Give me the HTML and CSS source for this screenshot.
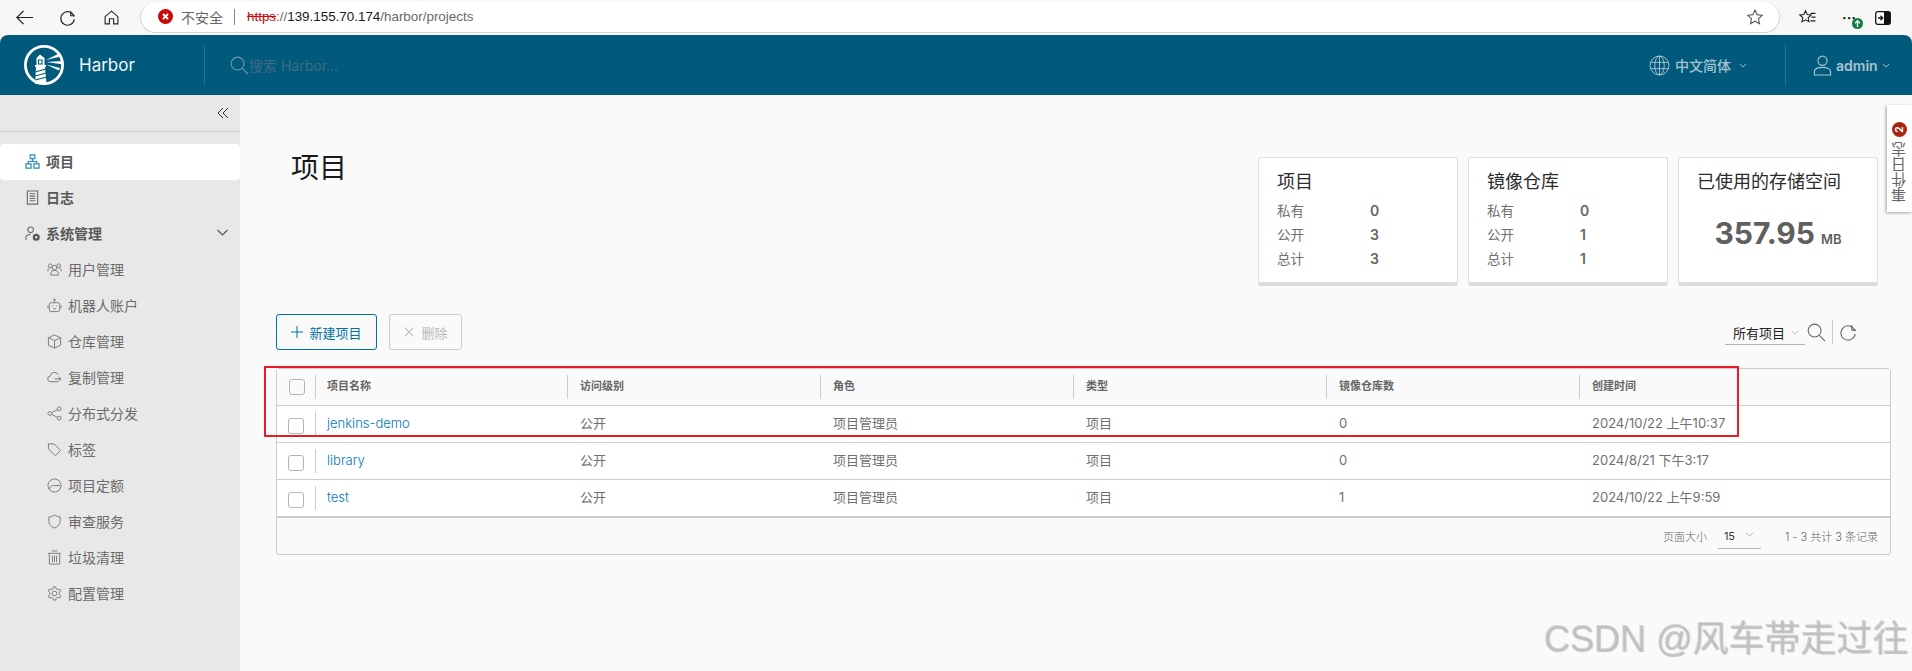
FILE: index.html
```html
<!DOCTYPE html>
<html lang="zh">
<head>
<meta charset="utf-8">
<title>Harbor</title>
<link rel="stylesheet" href="styles.css">
</head>
<body>
<div class="browser">
  <svg class="bicon back" viewBox="0 0 20 20"><path d="M19 10H2M9 3 2 10l7 7"/></svg>
  <svg class="bicon reload" viewBox="0 0 20 20"><path d="M16.800 8.500A7.500 7.500 0 1 0 17 11.500M13 2.500v5h4.500" /></svg>
  <svg class="bicon home" viewBox="0 0 20 20"><path d="M2.500 9 10 2.500 17.500 9v8.500h-5v-6h-5v6h-5z"/></svg>
  <div class="pill">
    <svg class="shield" viewBox="0 0 16 16"><circle cx="8" cy="8" r="8" fill="#c80a0a"/><path d="m5.300 5.300 5.400 5.400m0-5.400-5.400 5.400" stroke="#fff" stroke-width="2"/></svg>
    <span class="unsafe">不安全</span>
    <span class="pill-sep"></span>
    <span class="url"><s class="https">https</s><span class="dim">://</span>139.155.70.174<span class="dim">/harbor/projects</span></span>
    <svg class="star" viewBox="0 0 20 20"><path d="m10 2.200 2.400 5.200 5.600.7-4.100 3.800 1.100 5.600-5-2.800-5 2.800 1.100-5.600L2 8.100l5.600-.7z"/></svg>
  </div>
  <div class="browser-right">
    <svg class="bicon fav" viewBox="0 0 24 20"><path d="m9 2 2 4.500 4.800.5-3.600 3.300 1 4.700L9 12.700 4.800 15l1-4.700L2.200 7 7 6.500z"/><path d="M15 5h6M16 9.500h5M15 14h6"/></svg>
    <div class="more"><span>···</span><i class="update"><svg viewBox="0 0 10 10"><path d="M5 8.500v-6M2.800 4.700 5 2.500l2.200 2.200" fill="none" stroke="#fff" stroke-width="1.200"/></svg></i></div>
    <svg class="bicon split" viewBox="0 0 16 14"><rect x=".7" y=".7" width="14.600" height="12.600" rx="2" fill="#fff" stroke="#111"/><rect x="9" y="1" width="6" height="12" fill="#111"/><path d="M3 7h4.500M5.500 4.800 7.700 7l-2.200 2.200" fill="none" stroke="#111" stroke-width="1.300"/></svg>
  </div>
</div>

<header class="topbar">
  <div class="brand">
    <svg class="logo" viewBox="0 0 40 40">
      <circle cx="20" cy="20" r="18.600" fill="none" stroke="#fff" stroke-width="2.800"/>
      <path d="M16 9.500 20.500 13v7H22v2h-1l1.500 17h-11.500L12 22h-1v-2h1.500v-7z" fill="#fff"/>
      <path d="M14.500 15h3.500v4h-3.500zM11 27l11-3M11 31l11-3M11 35l12-3" fill="none" stroke="#015a7c" stroke-width="1.100"/>
      <path d="M22 15 35 8.500l1.500 3zM22 17l16-1v3.200zM22 19.500l14 3.500-1 2.500z" fill="#fff"/>
    </svg>
    <span class="brand-name">Harbor</span>
  </div>
  <div class="search">
    <svg class="search-ic" viewBox="0 0 20 20"><circle cx="8" cy="8" r="6.800"/><path d="m13 13 6 6"/></svg>
    <span class="search-ph">搜索 Harbor...</span>
  </div>
  <div class="lang">
    <svg class="globe" viewBox="0 0 20 20"><circle cx="10" cy="10" r="9"/><ellipse cx="10" cy="10" rx="4.500" ry="9"/><path d="M10 1v18M1.500 7h17M1.500 13h17"/></svg>
    <span>中文简体</span>
    <svg class="chev-sm lang-chev" viewBox="0 0 10 6"><path d="m1 1 4 4 4-4"/></svg>
  </div>
  <div class="user">
    <svg class="user-ic" viewBox="0 0 20 22"><circle cx="10" cy="6" r="4.800"/><path d="M1.500 21v-3.500c0-3 4-4.500 8.500-4.500s8.500 1.500 8.500 4.500V21z"/></svg>
    <span>admin</span>
    <svg class="chev-sm" viewBox="0 0 10 6"><path d="m1 1 4 4 4-4"/></svg>
  </div>
</header>

<div class="body-row">
  <nav class="sidebar">
    <div class="collapse">
      <svg viewBox="0 0 12 12"><path d="M6 1 1 6l5 5M11 1 6 6l5 5"/></svg>
    </div>
    <ul class="nav">
      <li class="item active">
        <svg class="nic" viewBox="0 0 16 16"><path d="M5.500 1h5v4h-5zM1 10.500h5.500V15H1zM9.500 10.500H15V15H9.500zM8 5v3M3.500 10.500V8h9v2.500"/></svg>项目
      </li>
      <li class="item strong">
        <svg class="nic" viewBox="0 0 16 16"><path d="M2.500 1h11v14h-11zM5 4h6M5 6.500h6M5 9h6M5 11.500h6"/></svg>日志
      </li>
      <li class="item strong">
        <svg class="nic" viewBox="0 0 16 16"><circle cx="6" cy="4" r="3"/><path d="M1 15v-2.500c0-2 2-3.500 5-3.500"/><circle cx="12" cy="12" r="2.500" stroke-width="2.500" stroke="#555"/></svg>系统管理
        <svg class="sys-chev" viewBox="0 0 12 8"><path d="m1 1 5 5 5-5"/></svg>
      </li>
      <li class="item sub"><svg class="nic" viewBox="0 0 16 16"><circle cx="8" cy="6" r="2.500"/><circle cx="3.500" cy="4" r="2"/><circle cx="12.500" cy="4" r="2"/><path d="M4 14v-2c0-2 2-3 4-3s4 1 4 3v2zM1 10V8.500c0-1 1-2 2.500-2M15 10V8.500c0-1-1-2-2.500-2"/></svg>用户管理</li>
      <li class="item sub"><svg class="nic" viewBox="0 0 16 16"><rect x="2.500" y="5" width="11" height="9.500" rx="2"/><circle cx="8" cy="2" r="1"/><path d="M8 3v2M1 8v3M15 8v3M6 8v1M10 8v1M6.500 11.500h3"/></svg>机器人账户</li>
      <li class="item sub"><svg class="nic" viewBox="0 0 16 16"><path d="M8 1 14.500 4v8L8 15l-6.500-3V4zM1.500 4 8 7l6.500-3M8 7v8"/></svg>仓库管理</li>
      <li class="item sub"><svg class="nic" viewBox="0 0 16 16"><path d="M12 12.500H4a3 3 0 0 1-.5-6A4.500 4.500 0 0 1 12 5M8 9.500h7M12.500 7.500l2.500 2-2.500 2"/></svg>复制管理</li>
      <li class="item sub"><svg class="nic" viewBox="0 0 16 16"><circle cx="3" cy="8" r="2"/><circle cx="13" cy="3" r="2"/><circle cx="13" cy="13" r="2"/><path d="m5 7 6-3M5 9l6 3"/></svg>分布式分发</li>
      <li class="item sub"><svg class="nic" viewBox="0 0 16 16"><path d="M1.500 2h6l7 7-5.500 5.500-7.500-7zM4.500 4.500h.1"/></svg>标签</li>
      <li class="item sub"><svg class="nic" viewBox="0 0 16 16"><circle cx="8" cy="8" r="7"/><path d="M2.500 12C3.500 8.500 6 7.500 8 8h6"/></svg>项目定额</li>
      <li class="item sub"><svg class="nic" viewBox="0 0 16 16"><path d="M8 1c2 1.500 4 2 6 2v5c0 3.500-3 6-6 7-3-1-6-3.500-6-7V3c2 0 4-.5 6-2z"/></svg>审查服务</li>
      <li class="item sub"><svg class="nic" viewBox="0 0 16 16"><path d="M2.500 4v11h11V4M1 3.500h14M5 1h6M5.800 6v7M8 6v7M10.200 6v7"/></svg>垃圾清理</li>
      <li class="item sub"><svg class="nic" viewBox="0 0 16 16"><circle cx="8" cy="8" r="2.500"/><path d="M6.800 1h2.400l.5 2 1.700.9 2-.7 1.200 2-1.500 1.600v2.400l1.500 1.600-1.200 2-2-.7-1.700.9-.5 2H6.800l-.5-2-1.700-.9-2 .7-1.200-2 1.500-1.600V6.800L1.400 5.200l1.200-2 2 .7 1.700-.9z"/></svg>配置管理</li>
    </ul>
  </nav>

  <main class="content">
    <section class="hero">
      <h1 class="title">项目</h1>
      <div class="cards">
        <div class="card">
          <h3>项目</h3>
          <dl class="stat"><dt>私有</dt><dd>0</dd><dt>公开</dt><dd>3</dd><dt>总计</dt><dd>3</dd></dl>
        </div>
        <div class="card">
          <h3>镜像仓库</h3>
          <dl class="stat"><dt>私有</dt><dd>0</dd><dt>公开</dt><dd>1</dd><dt>总计</dt><dd>1</dd></dl>
        </div>
        <div class="card">
          <h3>已使用的存储空间</h3>
          <div class="usage"><b>357.95</b><span>MB</span></div>
        </div>
      </div>
    </section>

    <section class="toolbar">
      <button class="btn primary"><svg viewBox="0 0 14 14"><path d="M7 0v14M0 7h14"/></svg>新建项目</button>
      <button class="btn disabled"><svg viewBox="0 0 14 14"><path d="m2 2 10 10M12 2 2 12"/></svg>删除</button>
      <div class="filter">
        <div class="select"><span>所有项目</span><svg viewBox="0 0 10 6"><path d="m1 1 4 4 4-4"/></svg></div>
        <svg class="tool-ic" viewBox="0 0 20 20"><circle cx="8" cy="8" r="6.800"/><path d="m13 13 6 6"/></svg>
        <span class="tool-sep"></span>
        <svg class="tool-ic" viewBox="0 0 20 20"><path d="M16.800 8.500A7.500 7.500 0 1 0 17 11.500M13.500 2v5.500H18"/></svg>
      </div>
    </section>

    <section class="grid">
      <div class="row head">
        <div class="cell check"><i class="box"></i></div>
        <div class="cell">项目名称</div>
        <div class="cell">访问级别</div>
        <div class="cell">角色</div>
        <div class="cell">类型</div>
        <div class="cell">镜像仓库数</div>
        <div class="cell">创建时间</div>
      </div>
      <div class="row">
        <div class="cell check"><i class="box"></i></div>
        <div class="cell"><a>jenkins-demo</a></div>
        <div class="cell">公开</div>
        <div class="cell">项目管理员</div>
        <div class="cell">项目</div>
        <div class="cell">0</div>
        <div class="cell">2024/10/22 上午10:37</div>
      </div>
      <div class="row">
        <div class="cell check"><i class="box"></i></div>
        <div class="cell"><a>library</a></div>
        <div class="cell">公开</div>
        <div class="cell">项目管理员</div>
        <div class="cell">项目</div>
        <div class="cell">0</div>
        <div class="cell">2024/8/21 下午3:17</div>
      </div>
      <div class="row last">
        <div class="cell check"><i class="box"></i></div>
        <div class="cell"><a>test</a></div>
        <div class="cell">公开</div>
        <div class="cell">项目管理员</div>
        <div class="cell">项目</div>
        <div class="cell">1</div>
        <div class="cell">2024/10/22 上午9:59</div>
      </div>
      <div class="foot">
        <span>页面大小</span>
        <div class="page-size"><span>15</span><svg viewBox="0 0 10 6"><path d="m1 1 4 4 4-4"/></svg></div>
        <span class="count">1 - 3 共计 3 条记录</span>
      </div>
    </section>
  </main>
</div>

<div class="redbox"></div>
<aside class="event-tab"><i class="badge">2</i><span>事件日志</span></aside>
<div class="watermark">CSDN @风车帯走过往</div>
</body>
</html>
```
FILE: styles.css
```css
* { box-sizing: border-box; }
html, body { margin: 0; height: 100%; }
body {
  width: 1912px; height: 671px; overflow: hidden; position: relative;
  display: flex; flex-direction: column;
  background: #f7f7f7; color: #666;
  font-family: Inter, "Noto Sans CJK SC", sans-serif; font-size: 13px;
}
svg { display: block; flex: none; }

/* browser chrome */
.browser { height: 35px; flex: none; display: flex; align-items: center; padding-left: 15px; background: #f7f7f7; }
.bicon { fill: none; stroke: #222; stroke-width: 1.300; }
.back { width: 19px; height: 19px; }
.reload { width: 18px; height: 18px; margin-left: 25px; }
.home { width: 17px; height: 17px; margin-left: 26px; }
.pill {
  width: 1640px; height: 31px; margin: -1px 0 0 20px; padding: 0 15px 0 17px;
  display: flex; align-items: center;
  background: #fff; border: 1px solid #d6d6d6; border-top: 0;
  border-radius: 16px;
}
.shield { width: 15px; height: 15px; }
.unsafe { margin-left: 8px; color: #666; font-size: 14px; }
.pill-sep { width: 1px; height: 16px; background: #888; margin: 0 12px 0 11px; }
.url { font-family: "Liberation Sans", sans-serif; font-size: 13.400px; color: #1a1a1a; }
.dim { color: #6a6a6a; }
.https { color: #c80a0a; }
.star { width: 18px; height: 18px; margin-left: auto; fill: none; stroke: #555; stroke-width: 1.200; }
.browser-right { flex: 1; display: flex; align-items: center; padding-left: 18px; }
.fav { width: 20px; height: 17px; }
.more { position: relative; margin-left: 24px; width: 22px; font-size: 14px; font-weight: 700; color: #222; line-height: 14px; }
.update { position: absolute; left: 10px; top: 7px; width: 11px; height: 11px; border-radius: 50%; background: #107c41; }
.split { width: 16px; height: 14px; margin-left: 11px; stroke: none; fill: none; }

/* top bar */
.topbar {
  height: 60px; flex: none; display: flex; align-items: center;
  background: #015a7c; border-radius: 8px 8px 0 0;
}
.brand { width: 205px; height: 40px; display: flex; align-items: center; padding-left: 24px; border-right: 1px solid #2b7491; }
.logo { width: 40px; height: 40px; }
.brand-name { margin-left: 15px; font-size: 17px; color: #f1f6f9; }
.search { display: flex; align-items: center; padding-left: 25px; flex: 1; }
.search-ic { width: 19px; height: 19px; fill: none; stroke: #6d9bb0; stroke-width: 1.100; }
.search-ph { font-size: 14px; color: #3f6b80; }
.lang { display: flex; align-items: center; height: 40px; color: #a7c3d0; font-size: 14px; font-weight: 500; }
.globe { width: 21px; height: 21px; margin-right: 5px; fill: none; stroke: #a7c3d0; stroke-width: .9; }
.chev-sm { width: 8px; height: 5px; fill: none; stroke: #a7c3d0; stroke-width: 1.200; }
.lang-chev { margin-left: 8px; }
.user { width: 127px; margin-left: 38px; height: 40px; display: flex; align-items: center; padding-left: 27px; border-left: 1px solid #2b7491; color: #a7c3d0; font-size: 14px; font-weight: 600; }
.user-ic { width: 19px; height: 21px; margin-right: 4px; fill: none; stroke: #a7c3d0; stroke-width: 1.200; }
.user .chev-sm { margin-left: 4px; }

/* body */
.body-row { flex: 1; display: flex; min-height: 0; }
.sidebar { width: 240px; flex: none; background: #e8e8e8; }
.collapse { height: 37px; border-bottom: 1px solid #ccc; display: flex; justify-content: flex-end; align-items: center; padding: 0 11px 0 0; }
.collapse svg { width: 12px; height: 12px; fill: none; stroke: #333; stroke-width: 1; }
.nav { list-style: none; margin: 12px 0 0; padding: 0; }
.item { height: 36px; display: flex; align-items: center; padding: 0 0 2px 25px; font-size: 14px; color: #6b6b6b; position: relative; }
.nic { width: 15px; height: 15px; margin-right: 6px; fill: none; stroke: #777; stroke-width: 1; }
.active, .strong { font-weight: 700; color: #595959; }
.active { background: #fff; border-radius: 4px; }
.active .nic { stroke: #2a8fc0; stroke-width: 1.300; }
.strong .nic { stroke: #6c6c6c; stroke-width: 1.200; }
.sub { padding-left: 47px; }
.sys-chev { width: 13px; height: 8px; margin-left: auto; margin-right: 11px; fill: none; stroke: #555; stroke-width: 1.100; }

.content { flex: 1; background: #fafafa; padding: 62px 21px 0 36px; min-width: 0; }
.hero { display: flex; justify-content: space-between; height: 129px; padding-right: 13px; }
.title { margin: -9px 0 0 15px; font-size: 28px; line-height: 40px; font-weight: 400; color: #1a1a1a; }
.cards { display: flex; gap: 10px; }
.card {
  width: 200px; height: 129px; padding: 11px 18px; background: #fff;
  border: 1px solid #e0e0e0; border-bottom: 4px solid #dcdcdc; border-radius: 3px;
}
.card h3 { margin: 0; font-size: 18px; line-height: 26px; font-weight: 400; color: #2b2b2b; white-space: nowrap; }
.stat { margin: 3px 0 0; display: grid; grid-template-columns: 93px 1fr; grid-auto-rows: 24px; align-items: center; font-size: 13.500px; color: #707070; }
.stat dt, .stat dd { margin: 0; }
.stat dd { font-weight: 600; font-size: 14px; color: #666; }
.usage { display: flex; align-items: baseline; justify-content: center; margin: 18px 0 0; color: #5f5f5f; }
.usage b { font-size: 30px; line-height: 40px; font-weight: 700; }
.usage span { margin-left: 6px; font-size: 13px; font-weight: 600; }

.toolbar { display: flex; align-items: center; margin-top: 28px; height: 36px; }
.btn {
  height: 36px; display: flex; align-items: center; justify-content: center; background: transparent;
  font: inherit; border-radius: 3px; border: 1px solid;
}
.btn svg { fill: none; width: 12px; height: 12px; margin-right: 6px; stroke-width: 1.200; }
.primary { width: 101px; color: #0072a3; border-color: #0072a3; }
.primary svg { stroke: #0072a3; }
.disabled { width: 73px; margin-left: 12px; color: #b8b8b8; border-color: #ccc; }
.disabled svg { stroke: #b8b8b8; }
.filter { margin-left: auto; margin-right: 33px; display: flex; align-items: center; }
.select { width: 80px; height: 24px; margin-top: 2px; padding-left: 8px; border-bottom: 1px solid #b3b3b3; display: flex; align-items: center; color: #222; font-size: 13px; }
.select svg { width: 8px; height: 5px; margin-left: 6px; fill: none; stroke: #b3b3b3; }
.tool-ic { width: 19px; height: 19px; margin-left: 2px; fill: none; stroke: #666; stroke-width: 1.100; }
.tool-sep { width: 1px; height: 24px; background: #ccc; margin: 0 4px 0 6px; }

.grid { margin-top: 18px; width: 1615px; height: 187px; border: 1px solid #ccc; border-radius: 3px; background: #fafafa; }
.row {
  display: grid; grid-template-columns: 38px 252px 253px 253px 253px 253px 1fr;
  height: 37px; background: #fff; border-bottom: 1px solid #ccc; align-items: center;
}
.row.last { border-bottom-width: 2px; height: 38px; }
.head { height: 37px; background: #fafafa; font-size: 11px; font-weight: 700; color: #666; }
.cell { height: 24px; line-height: 22px; padding-left: 12px; border-left: 1px solid transparent; white-space: nowrap; color: #707070; }
.head .cell { font-weight: 700; color: #666; }
.head .cell + .cell { border-left-color: #ccc; }
.check { padding-left: 0; display: flex; align-items: center; justify-content: center; }
.row .cell:nth-child(2) { border-left-color: #ccc; padding-left: 11px; }
.row:not(.head) .check { margin-top: 4px; padding-right: 2px; }
.box { width: 16px; height: 16px; border: 1px solid #b3b3b3; border-radius: 3px; background: #fff; }
.head .box { background: transparent; }
a { color: #0079b8; font-weight: 300; }
.foot { height: 36px; display: flex; justify-content: flex-end; align-items: center; padding-right: 12px; font-size: 11px; color: #666; font-weight: 300; }
.page-size { width: 43px; height: 24px; margin: 1px 24px 0 11px; padding-left: 6px; border-bottom: 1px solid #b3b3b3; display: flex; align-items: center; color: #333; font-size: 11px; font-weight: 400; }
.page-size svg { width: 9px; height: 5px; margin-left: 10px; margin-top: -3px; fill: none; stroke: #999; }

/* overlays */
.redbox { position: absolute; left: 264px; top: 366px; width: 1475px; height: 71px; border: 2px solid #ed1c24; pointer-events: none; }
.event-tab {
  position: absolute; right: 0; top: 105px; width: 25px; height: 107px;
  background: #fff; box-shadow: -1px 1px 3px rgba(0,0,0,.35);
  display: flex; flex-direction: column; align-items: center; padding-top: 17px;
  color: #666; font-size: 15px;
}
.event-tab span { writing-mode: vertical-rl; transform: rotate(180deg); margin-top: 5px; line-height: 25px; }
.badge { width: 15px; height: 15px; flex: none; border-radius: 50%; background: #a8240e; color: #fff; font: 700 10px/15px Inter, sans-serif; text-align: center; transform: rotate(-90deg); }
.watermark {
  position: absolute; right: 4px; top: 617px; font-family: "Liberation Sans", "Noto Sans CJK SC", sans-serif;
  font-size: 36px; line-height: 44px; color: rgba(190,190,190,.6); text-shadow: 1px 1px 1px rgba(90,90,90,.35); white-space: nowrap;
}
```
